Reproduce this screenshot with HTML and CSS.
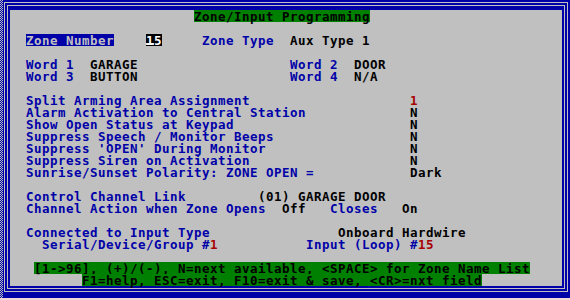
FILE: index.html
```html
<!DOCTYPE html>
<html lang="en">

<head>
    <meta charset="UTF-8">
    <title>Zone/Input Programming</title>
    <link rel="stylesheet" href="styles.css">
</head>

<body>
    <div class="screen">
        <div class="shade"></div>
        <div class="frame-outer">
            <div class="frame-inner">
                <div class="panel">
<div class="row">                       <span class="bar">Zone/Input Programming</span></div>
<div class="row"> </div>
<div class="row">  <span class="hl">Zone Number</span>    <span class="field"><span class="caret">1</span>5</span>     <span class="lbl">Zone Type</span>  Aux Type 1</div>
<div class="row"> </div>
<div class="row">  <span class="lbl">Word 1</span>  GARAGE                   <span class="lbl">Word 2</span>  DOOR</div>
<div class="row">  <span class="lbl">Word 3</span>  BUTTON                   <span class="lbl">Word 4</span>  N/A</div>
<div class="row"> </div>
<div class="row">  <span class="lbl">Split Arming Area Assignment</span>                    <span class="val">1</span></div>
<div class="row">  <span class="lbl">Alarm Activation to Central Station</span>             N</div>
<div class="row">  <span class="lbl">Show Open Status at Keypad</span>                      N</div>
<div class="row">  <span class="lbl">Suppress Speech / Monitor Beeps</span>                 N</div>
<div class="row">  <span class="lbl">Suppress 'OPEN' During Monitor</span>                  N</div>
<div class="row">  <span class="lbl">Suppress Siren on Activation</span>                    N</div>
<div class="row">  <span class="lbl">Sunrise/Sunset Polarity: ZONE OPEN =</span>            Dark</div>
<div class="row"> </div>
<div class="row">  <span class="lbl">Control Channel Link</span>         (01) GARAGE DOOR</div>
<div class="row">  <span class="lbl">Channel Action when Zone Opens</span>  Off   <span class="lbl">Closes</span>   On</div>
<div class="row"> </div>
<div class="row">  <span class="lbl">Connected to Input Type</span>                Onboard Hardwire</div>
<div class="row">    <span class="lbl">Serial/Device/Group #</span><span class="val">1</span>           <span class="lbl">Input (Loop) #</span><span class="val">15</span></div>
<div class="row"> </div>
<div class="row">   <span class="bar">[1-&gt;96], (+)/(-), N=next available, &lt;SPACE&gt; for Zone Name List</span></div>
<div class="row">         <span class="bar">F1=help, ESC=exit, F10=exit &amp; save, &lt;CR&gt;=nxt field</span></div>
                </div>
            </div>
        </div>
    </div>
</body>

</html>
```

FILE: styles.css
```css
body {
    margin: 0;
    background-color: #0000a8;
}

.screen {
    display: flex;
    width: 570px;
    height: 300px;
    background-color: #0000a8;
    border-bottom: 2px solid #f0d8d8;
    box-sizing: border-box;
}

/* dithered column on the far left */
.shade {
    width: 3px;
    background: repeating-conic-gradient(#0000a8 0 25%, #c0c0c0 0 50%) 0 0 / 2px 2px;
}

/* double line frame */
.frame-outer {
    margin: 2px 2px 0 1px;
    padding: 2px;
    border: 1px solid #c0c0c0;
    align-self: flex-start;
}

.frame-inner {
    padding: 4px 2px 2px 2px;
    border: 1px solid #c0c0c0;
}

.panel {
    width: 552px;
    height: 276px;
    background-color: #c0c0c0;
    color: #000;
    font-family: "DejaVu Sans Mono", monospace;
    font-weight: bold;
    font-size: 12.5px;
    letter-spacing: 0.474px;
}

.row {
    height: 12px;
    line-height: 13px;
    white-space: pre;
}

.row span {
    display: inline-block;
    height: 12px;
    vertical-align: top;
}

.lbl {
    color: #0000a8;
}

.val {
    color: #a80000;
}

.bar {
    background-color: #008000;
}

.hl {
    background-color: #0000a8;
    color: #c0c0c0;
}

.field {
    background-color: #000;
    color: #fff;
}

.row .caret {
    background: linear-gradient(to top, transparent 1px, #e8e8e8 1px, #e8e8e8 3px, transparent 3px);
}
```
